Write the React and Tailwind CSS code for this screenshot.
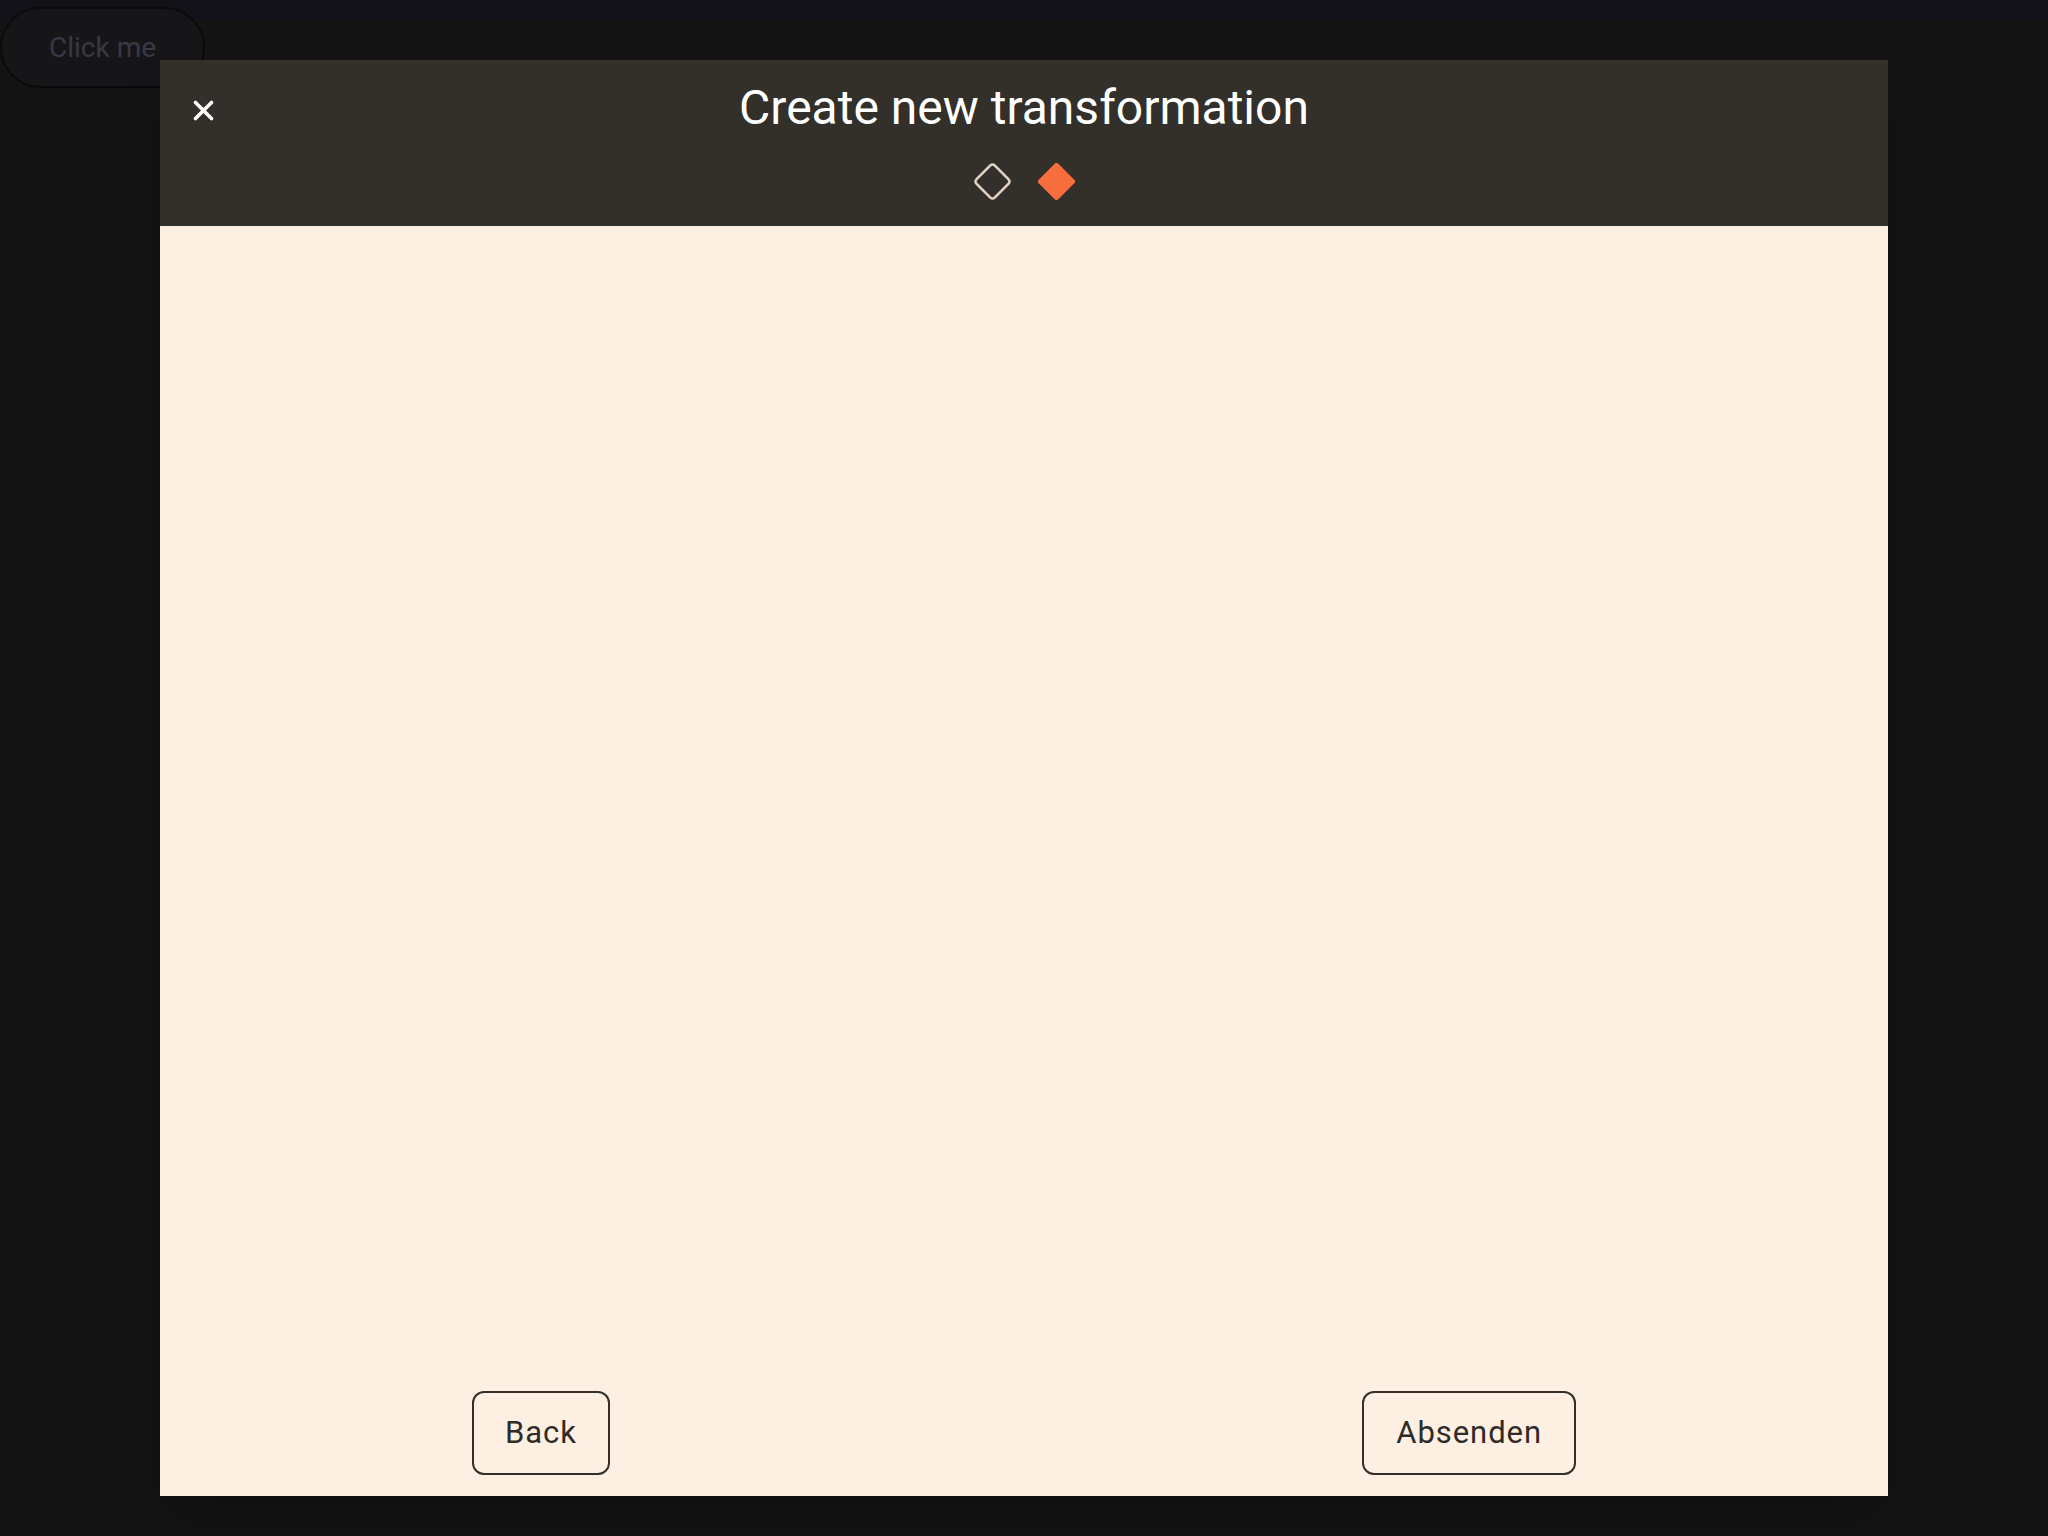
import { useState } from "react";

function Diamond({ filled }) {
  return (
    <svg width="37" height="37" viewBox="0 0 37 37">
      {filled ? (
        <rect x="4.6" y="4.6" width="27.8" height="27.8" rx="3" fill="#f76e3c" transform="rotate(45 18.5 18.5)" />
      ) : (
        <rect x="5.6" y="5.6" width="25.8" height="25.8" rx="3" fill="none" stroke="#e0d1c0" strokeWidth="2.6" transform="rotate(45 18.5 18.5)" />
      )}
    </svg>
  );
}

export default function App() {
  const [open, setOpen] = useState(true);
  const [step] = useState(1);

  return (
    <div className="min-h-screen bg-[linear-gradient(to_bottom,#131218_20px,#141414_20px)] font-['Roboto',sans-serif]">
      <button
        onClick={() => setOpen(true)}
        className="mt-[7px] h-[81px] w-[205px] rounded-full border-2 border-[#0b0b0d] bg-[#161619] pl-[47px] text-left text-[28px] text-[#3a3845]"
      >
        Click me
      </button>

      {open && (
        <div className="fixed inset-0 flex justify-center pt-[60px]">
          <div className="flex h-[1436px] w-[1728px] flex-col shadow-2xl">
            {/* Header */}
            <div className="relative flex h-[166px] flex-col items-center bg-[#332f2a] pt-[23px]">
              <button onClick={() => setOpen(false)} className="absolute left-[33px] top-[40px]">
                <svg width="21" height="21" viewBox="0 0 21 21">
                  <path d="M2.5 2.5 L18.5 18.5 M18.5 2.5 L2.5 18.5" stroke="#ffffff" strokeWidth="3.6" strokeLinecap="round" />
                </svg>
              </button>
              <h1 className="text-[48px] leading-[49px] text-white">Create new transformation</h1>
              <div className="mt-[31px] flex gap-[27px]">
                <Diamond filled={step === 0} />
                <Diamond filled={step === 1} />
              </div>
            </div>

            {/* Body */}
            <div className="flex flex-1 flex-col justify-end bg-[#fdf0e3] px-[312px] pb-[21px]">
              <div className="flex items-center justify-between">
                <button className="h-[84px] rounded-[12px] border-2 border-[#332f2a] px-[31px] text-[31px] tracking-[0.03em] text-[#2f2b27]">
                  Back
                </button>
                <button className="h-[84px] rounded-[12px] border-2 border-[#332f2a] px-[32px] text-[31px] tracking-[0.03em] text-[#2f2b27]">
                  Absenden
                </button>
              </div>
            </div>
          </div>
        </div>
      )}
    </div>
  );
}
